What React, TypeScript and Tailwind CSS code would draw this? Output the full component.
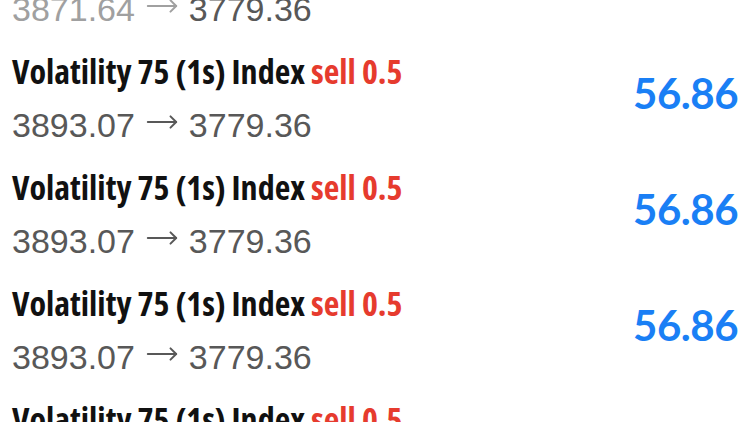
import { MoveRight } from "lucide-react";

type Trade = {
  symbol: string;
  side: string;
  volume: string;
  open: string;
  close: string;
  profit: string;
};

const trades: Trade[] = [
  { symbol: "Volatility 75 (1s) Index", side: "sell", volume: "0.5", open: "3871.64", close: "3779.36", profit: "56.86" },
  { symbol: "Volatility 75 (1s) Index", side: "sell", volume: "0.5", open: "3893.07", close: "3779.36", profit: "56.86" },
  { symbol: "Volatility 75 (1s) Index", side: "sell", volume: "0.5", open: "3893.07", close: "3779.36", profit: "56.86" },
  { symbol: "Volatility 75 (1s) Index", side: "sell", volume: "0.5", open: "3893.07", close: "3779.36", profit: "56.86" },
  { symbol: "Volatility 75 (1s) Index", side: "sell", volume: "0.5", open: "3893.07", close: "3779.36", profit: "56.86" },
];

export default function App() {
  return (
    <div className="h-[422px] w-[750px] overflow-hidden bg-white">
      <div className="mt-[-76px]">
        {trades.map((t, i) => (
          <div className="flex h-[116px] items-center justify-between pl-[12px] pr-[12px]" key={i}>
            <div>
              <div className="text-[34px] font-bold leading-[40px] text-[#111] [font-family:'Open_Sans',sans-serif] [font-stretch:condensed]">
                {t.symbol} <span className="text-[#e63b2e]">{t.side} {t.volume}</span>
              </div>
              <div className="mt-[12px] text-[34px] leading-[40px] text-[#585858] [font-family:'Liberation_Sans',Arial,sans-serif]">
                <span className={i === 0 ? "text-[#a0a0a0]" : ""}>
                  {t.open}{" "}
                  <MoveRight
                    className="relative top-[2px] ml-[1px] mr-0 inline-block h-[34px] w-[34px] align-baseline"
                    strokeWidth={1.4}
                  />
                </span>{" "}
                {t.close}
              </div>
            </div>
            <div className="mb-[11px] text-[42px] font-bold leading-[42px] tracking-[-0.5px] text-[#1a7ff5] [font-family:Lato,sans-serif]">
              {t.profit}
            </div>
          </div>
        ))}
      </div>
    </div>
  );
}
